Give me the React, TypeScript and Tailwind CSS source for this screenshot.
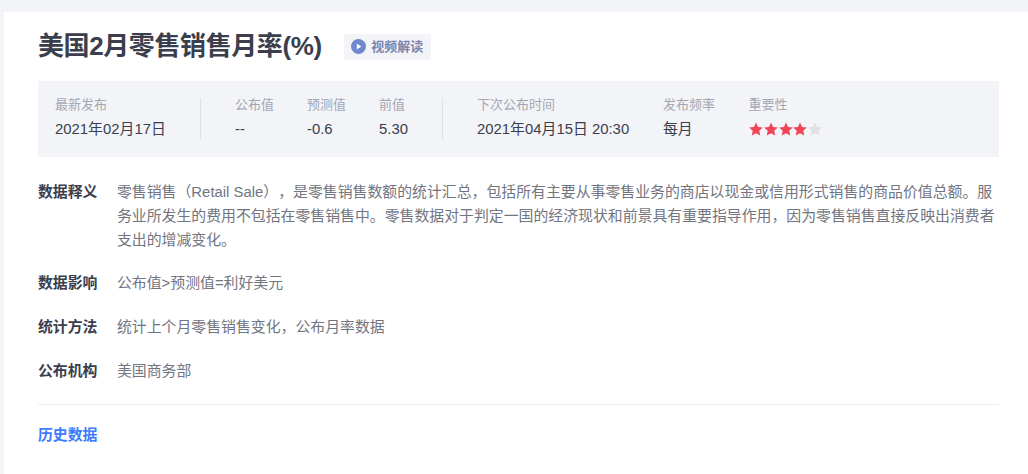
const FONT = "font-['Liberation_Sans','Noto_Sans_CJK_SC',sans-serif]";

function Star({ on }: { on: boolean }) {
  return (
    <svg width="14" height="14" viewBox="0 0 24 24" className={on ? "fill-[#ee4658]" : "fill-[#e0e0e0]"}>
      <path d="M12 .8l3.5 7.6 8.2 1-6.1 5.6 1.7 8.2L12 19.1l-7.3 4.1 1.7-8.2L.3 9.4l8.2-1z" />
    </svg>
  );
}

function Stat({ label, value, className, children }: { label: string; value?: string; className: string; children?: React.ReactNode }) {
  return (
    <div className={`flex flex-col ${className}`}>
      <div className="text-[13px] leading-[16px] text-[#a3a7b5] whitespace-nowrap">{label}</div>
      {children ?? <div className="mt-[4px] text-[14.88px] leading-[24px] text-[#3b3e4c] whitespace-nowrap">{value}</div>}
    </div>
  );
}

function Row({ label, text, className }: { label: string; text: string; className: string }) {
  return (
    <div className={`flex ${className}`}>
      <div className="w-[79px] shrink-0 text-[14.88px] leading-[23.8px] font-bold text-[#3b3e4c]">{label}</div>
      <div className="flex-1 text-[14.88px] leading-[23.8px] text-[#72757f] [text-spacing-trim:space-all]">{text}</div>
    </div>
  );
}

export default function App() {
  return (
    <div className={`${FONT} h-[474px] w-[1028px] overflow-hidden bg-[#f3f4f8] pl-[4px] pt-[12px]`}>
      <div className="h-[462px] bg-white pl-[34px] pr-[29px] pt-[16px]">
        <div className="flex h-[37px] items-center">
          <h1 className="text-[26px] leading-[37px] font-bold text-[#3b3e4c] tracking-[-0.4px] whitespace-nowrap">美国2月零售销售月率(%)</h1>
          <div className="ml-[22px] flex h-[26px] w-[87px] items-center justify-center gap-[5px] rounded-[2px] bg-[#f3f4f8]">
            <svg width="15" height="15" viewBox="0 0 16 16">
              <circle cx="8" cy="8" r="8" fill="#6f87cc" />
              <path d="M6.2 4.8v6.4L11 8z" fill="#fff" />
            </svg>
            <span className="text-[13px] font-bold text-[#7c84ab] whitespace-nowrap">视频解读</span>
          </div>
        </div>

        <div className="mt-[16px] flex h-[76px] items-center bg-[#f3f4f8] pl-[17px]">
          <Stat label="最新发布" value="2021年02月17日" className="w-[145px]" />
          <div className="h-[42px] w-px bg-[#dfe1e6]" />
          <Stat label="公布值" value="--" className="ml-[34px] w-[72px]" />
          <Stat label="预测值" value="-0.6" className="w-[72px]" />
          <Stat label="前值" value="5.30" className="w-[63px]" />
          <div className="h-[42px] w-px bg-[#dfe1e6]" />
          <Stat label="下次公布时间" value="2021年04月15日 20:30" className="ml-[34px] w-[186px]" />
          <Stat label="发布频率" value="每月" className="w-[85.5px]" />
          <Stat label="重要性" className="w-[90px]">
            <div className="ml-[0.5px] mt-[4px] flex h-[24px] items-center gap-[0.8px]">
              {[true, true, true, true, false].map((on, i) => (
                <Star key={i} on={on} />
              ))}
            </div>
          </Stat>
        </div>

        <Row
          className="mt-[24px]"
          label="数据释义"
          text="零售销售（Retail Sale），是零售销售数额的统计汇总，包括所有主要从事零售业务的商店以现金或信用形式销售的商品价值总额。服务业所发生的费用不包括在零售销售中。零售数据对于判定一国的经济现状和前景具有重要指导作用，因为零售销售直接反映出消费者支出的增减变化。"
        />
        <Row className="mt-[20px]" label="数据影响" text="公布值>预测值=利好美元" />
        <Row className="mt-[20px]" label="统计方法" text="统计上个月零售销售变化，公布月率数据" />
        <Row className="mt-[20px]" label="公布机构" text="美国商务部" />

        <div className="mt-[20px] h-px bg-[#eeeeee]" />
        <div className="mt-[19px] text-[14.88px] leading-[23.8px] font-bold text-[#3d7cff]">历史数据</div>
      </div>
    </div>
  );
}
